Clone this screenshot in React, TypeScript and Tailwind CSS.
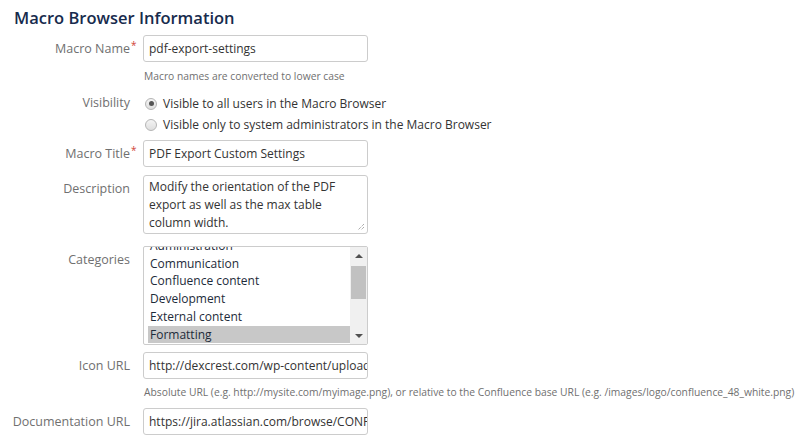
import React from 'react';

const font = { fontFamily: '"Open Sans", "Liberation Sans", sans-serif' };

function Label({ text, required }: { text: string; required?: boolean }): React.ReactElement {
  return (
    <div className="relative w-[130px] shrink-0 text-right text-[12.5px] leading-[18px] text-[#707070]">
      {text}
      {required ? (
        <span className="absolute top-[-4px] left-full ml-px text-[10px] text-[#d04437]">*</span>
      ) : null}
    </div>
  );
}

function TextInput({ value }: { value: string }): React.ReactElement {
  return (
    <div className="h-[27px] w-[225px] overflow-hidden whitespace-nowrap rounded-[3px] border border-[#cccccc] bg-white px-[5px] text-[12px] leading-[25px] text-[#333333]">
      {value}
    </div>
  );
}

function Radio({ checked, label }: { checked: boolean; label: string }): React.ReactElement {
  return (
    <div className="flex h-[21px] items-center gap-[6px] pl-[2px] text-[12px] text-[#333333]">
      <span className="flex h-[12px] w-[12px] items-center justify-center rounded-full border border-[#b5b5b5] bg-gradient-to-b from-[#f4f4f4] to-[#dedede]">
        {checked ? <span className="h-[5px] w-[5px] rounded-full bg-[#555555]" /> : null}
      </span>
      <span>{label}</span>
    </div>
  );
}

const CATEGORIES = [
  'Administration',
  'Communication',
  'Confluence content',
  'Development',
  'External content',
  'Formatting',
];

export default function App(): React.ReactElement {
  return (
    <div className="min-h-screen w-full bg-white" style={font}>
      <div className="px-[14px] pt-[6px]">
        <h2 className="text-[16.5px] leading-[24px] font-semibold text-[#172b4d]">Macro Browser Information</h2>
      </div>

      <div className="mt-[5px] flex flex-col">
        <div className="flex items-center gap-[13px]">
          <Label text="Macro Name" required />
          <TextInput value="pdf-export-settings" />
        </div>
        <div className="mt-[6px] pl-[144px] text-[10.3px] leading-[16px] text-[#707070]">
          Macro names are converted to lower case
        </div>

        <div className="mt-[9px] flex items-start gap-[13px]">
          <div className="pt-[1px]">
            <Label text="Visibility" />
          </div>
          <div className="flex flex-col">
            <Radio checked label="Visible to all users in the Macro Browser" />
            <Radio checked={false} label="Visible only to system administrators in the Macro Browser" />
          </div>
        </div>

        <div className="mt-[5px] flex items-center gap-[13px]">
          <Label text="Macro Title" required />
          <TextInput value="PDF Export Custom Settings" />
        </div>

        <div className="mt-[8px] flex items-start gap-[13px]">
          <div className="pt-[5px]">
            <Label text="Description" />
          </div>
          <div className="relative h-[59px] w-[225px] rounded-[3px] border border-[#cccccc] bg-white px-[5px] pt-[2px] text-[12px] leading-[18px] text-[#333333]">
            Modify the orientation of the PDF export as well as the max table column width.
            <svg className="absolute right-[2px] bottom-[2px]" width="8" height="8" viewBox="0 0 8 8">
              <path d="M7 1 L1 7 M7 4 L4 7" stroke="#8a8a8a" strokeWidth="1" strokeDasharray="1 1" />
            </svg>
          </div>
        </div>

        <div className="mt-[12px] flex items-start gap-[13px]">
          <div className="pt-[5px]">
            <Label text="Categories" />
          </div>
          <div className="flex h-[99px] w-[225px] overflow-hidden rounded-[2px] border border-[#cccccc] bg-white">
            <div className="flex-1 overflow-hidden pl-[4px]">
              <div className="mt-[-10px] flex flex-col text-[12px] leading-[17.7px] text-[#1d2b3a]">
                {CATEGORIES.map((c) => (
                  <div
                    key={c}
                    className={`px-[2px] ${c === 'Formatting' ? 'bg-[#c8c8c8]' : ''}`}
                  >
                    {c}
                  </div>
                ))}
              </div>
            </div>
            <div className="flex w-[17px] flex-col items-center bg-[#f0f0f0]">
              <div className="flex h-[17px] items-center justify-center">
                <span className="h-0 w-0 border-x-[4px] border-b-[4px] border-x-transparent border-b-[#505050]" />
              </div>
              <div className="mt-[2px] h-[33px] w-[15px] bg-[#c1c1c1]" />
              <div className="flex-1" />
              <div className="flex h-[17px] items-center justify-center">
                <span className="h-0 w-0 border-x-[4px] border-t-[4px] border-x-transparent border-t-[#505050]" />
              </div>
            </div>
          </div>
        </div>

        <div className="mt-[7px] flex items-center gap-[13px]">
          <Label text="Icon URL" />
          <TextInput value="http://dexcrest.com/wp-content/uploads/2017/pdf-icon.png" />
        </div>
        <div className="mt-[5px] pl-[144px] text-[10.3px] leading-[16px] whitespace-nowrap text-[#707070]">
          Absolute URL (e.g. http://mysite.com/myimage.png), or relative to the Confluence base URL (e.g. /images/logo/confluence_48_white.png)
        </div>

        <div className="mt-[8px] flex items-center gap-[13px]">
          <Label text="Documentation URL" />
          <TextInput value="https://jira.atlassian.com/browse/CONFSERVER-1234" />
        </div>
      </div>
    </div>
  );
}
